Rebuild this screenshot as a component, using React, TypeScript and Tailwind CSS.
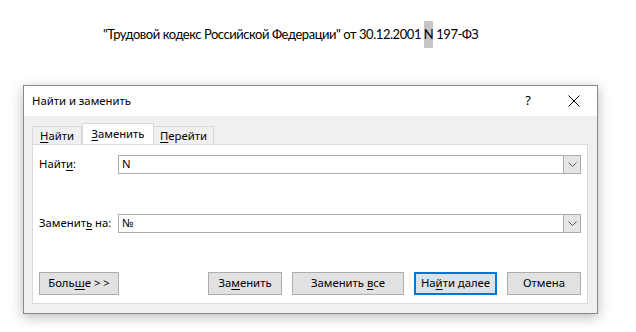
import React from "react";

function Chevron() {
  return (
    <div className="flex h-full w-[17px] items-center justify-center border-l border-[#acacac] bg-[#e5e5e5]">
      <svg width="9" height="5" viewBox="0 0 9 5" fill="none">
        <polyline points="0.5,0.5 4.5,4.5 8.5,0.5" stroke="#555" strokeWidth="1" />
      </svg>
    </div>
  );
}

function Combo({ value }: { value: string }) {
  return (
    <div className="flex h-[19px] flex-1 items-stretch border border-[#acacac] bg-white">
      <div className="flex flex-1 items-center pl-[3px] text-black">{value}</div>
      <Chevron />
    </div>
  );
}

function Btn({
  children,
  width,
  primary,
}: {
  children: React.ReactNode;
  width: string;
  primary?: boolean;
}) {
  return (
    <div
      className={
        primary
          ? `flex h-[23px] ${width} items-center justify-center border-2 border-[#0078d7] bg-[#e1e1e1] text-black`
          : `flex h-[23px] ${width} items-center justify-center border border-[#adadad] bg-[#e1e1e1] text-black`
      }
    >
      <span className="whitespace-pre">{children}</span>
    </div>
  );
}

const U = ({ children }: { children: React.ReactNode }) => (
  <span className="underline underline-offset-[2px]">{children}</span>
);

export default function App() {
  return (
    <div className="h-[332px] w-[636px] overflow-hidden bg-white" style={{ fontFamily: '"Noto Sans", sans-serif' }}>
      {/* document line */}
      <div className="box-content flex h-[27px] items-center pl-[103px] pt-[21px] text-[13px] tracking-[-0.45px] text-black" style={{ fontFamily: "Lato, sans-serif" }}>
        <span className="whitespace-pre">"Трудовой кодекс Российской Федерации" от 30.12.2001 </span>
        <span className="flex h-[27px] items-center bg-[#c6c6c6]">N</span>
        <span className="whitespace-pre"> 197-ФЗ</span>
      </div>

      {/* dialog */}
      <div className="ml-[23px] mt-[37px] flex h-[229px] w-[575px] flex-col border border-[#8a8a8a] bg-[#f0f0f0] text-[11.3px] shadow-[0_3px_12px_rgba(0,0,0,0.28)]">
        <div className="flex h-[30px] items-center bg-white pl-[8px] text-black">
          <span>Найти и заменить</span>
          <div className="ml-auto flex items-center">
            <span className="w-[46px] text-center text-[13px]">?</span>
            <div className="flex w-[46px] items-center justify-center">
              <svg width="12" height="12" viewBox="0 0 12 12">
                <line x1="0.5" y1="0.5" x2="11.5" y2="11.5" stroke="#000" strokeWidth="1" />
                <line x1="11.5" y1="0.5" x2="0.5" y2="11.5" stroke="#000" strokeWidth="1" />
              </svg>
            </div>
          </div>
        </div>

        <div className="flex flex-1 flex-col pb-[9px] pl-[8px] pr-[9px]">
          {/* tabs */}
          <div className="mt-[7px] flex h-[21px] items-end text-black">
            <div className="flex h-[18px] w-[50px] items-center justify-center border border-b-0 border-[#d9d9d9] bg-[#f0f0f0] pt-[2px]">
              <span><U>Н</U>айти</span>
            </div>
            <div className="-mb-px flex h-[22px] w-[72px] items-center justify-center border border-b-0 border-[#d9d9d9] bg-white">
              <span><U>З</U>аменить</span>
            </div>
            <div className="flex h-[18px] w-[60px] items-center justify-center border border-b-0 border-l-0 border-[#d9d9d9] bg-[#f0f0f0] pt-[2px]">
              <span><U>П</U>ерейти</span>
            </div>
          </div>

          {/* panel */}
          <div className="flex flex-1 flex-col border border-[#d9d9d9] bg-white px-[6px] pb-[8px] pt-[10px] text-black">
            <div className="flex items-center">
              <span className="w-[79px]">Найт<U>и</U>:</span>
              <Combo value="N" />
            </div>
            <div className="mt-[40px] flex items-center">
              <span className="w-[79px]">Заменит<U>ь</U> на:</span>
              <Combo value="№" />
            </div>
            <div className="mt-auto flex items-center">
              <Btn width="w-[80px]">
                Боль<U>ш</U>е &gt; &gt;
              </Btn>
              <div className="ml-auto flex items-center gap-[10px]">
                <Btn width="w-[74px]">
                  За<U>м</U>енить
                </Btn>
                <Btn width="w-[112px]">
                  Заменить <U>в</U>се
                </Btn>
                <Btn width="w-[83px]" primary>
                  На<U>й</U>ти далее
                </Btn>
                <Btn width="w-[74px]">Отмена</Btn>
              </div>
            </div>
          </div>
        </div>
      </div>
    </div>
  );
}
